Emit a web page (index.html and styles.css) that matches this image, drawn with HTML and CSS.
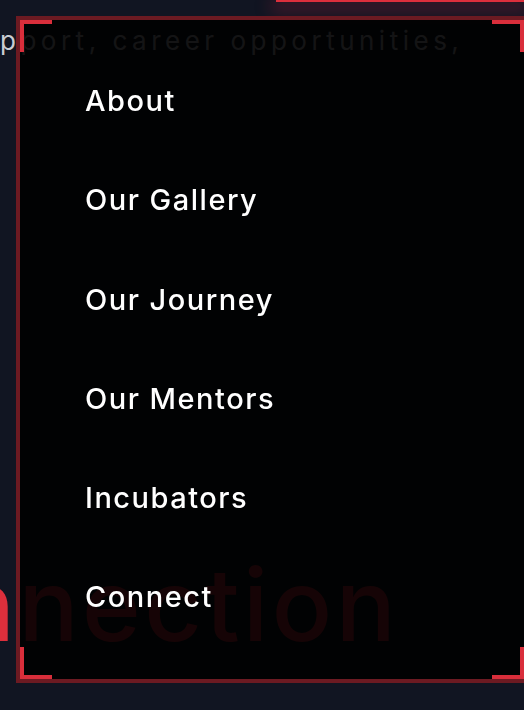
FILE: index.html
```html
<!DOCTYPE html>
<html lang="en">
<head>
<meta charset="utf-8">
<title>Menu</title>
<link rel="stylesheet" href="styles.css">
</head>
<body>
  <div class="page">
    <div class="topbar">
      <a class="cta" href="#"></a>
    </div>
    <p class="lead">pport, career opportunities,</p>
    <h2 class="hero">Connection</h2>
  </div>

  <nav class="menu">
    <span class="corner tl"></span>
    <span class="corner tr"></span>
    <span class="corner bl"></span>
    <span class="corner br"></span>
    <ul class="menu-list">
      <li><a href="#">About</a></li>
      <li><a href="#">Our Gallery</a></li>
      <li><a href="#">Our Journey</a></li>
      <li><a href="#">Our Mentors</a></li>
      <li><a href="#">Incubators</a></li>
      <li><a href="#">Connect</a></li>
    </ul>
  </nav>
</body>
</html>
```

FILE: styles.css
```css
* { box-sizing: border-box; }

html, body {
  margin: 0;
  padding: 0;
  overflow: hidden;
}

body {
  width: 524px;
  height: 710px;
  background: #111522;
  font-family: Inter, "Noto Sans", sans-serif;
  color: #fff;
}

.page {
  display: flex;
  flex-direction: column;
}

.topbar {
  display: flex;
  justify-content: flex-end;
  height: 16px;
  overflow: visible;
}

.cta {
  display: block;
  width: 248px;
  height: 2px;
  background: #dc2f3c;
  box-shadow: 0 5px 16px 5px rgba(170, 35, 60, 0.35);
}

.lead {
  margin: 8px 0 0 0;
  font-size: 26px;
  line-height: 34px;
  letter-spacing: 4.5px;
  color: #c9ccd3;
  white-space: nowrap;
}

.hero {
  margin: 497px 0 0 -186px;
  font-size: 100px;
  font-weight: 500;
  line-height: 100px;
  letter-spacing: 3.5px;
  color: #dc2f3c;
  white-space: nowrap;
}

.menu {
  position: fixed;
  left: 16px;
  top: 16px;
  width: 512px;
  height: 667px;
  border: 4px solid #6c1a22;
  background: rgba(0, 0, 0, 0.9);
  padding: 64px 0 0 65px;
}

.corner {
  position: absolute;
  width: 32px;
  height: 32px;
  border: 0 solid #d92e3b;
}
.corner.tl { left: 0; top: 0; border-top-width: 4px; border-left-width: 4px; }
.corner.tr { right: 0; top: 0; border-top-width: 4px; border-right-width: 4px; }
.corner.bl { left: 0; bottom: 0; border-bottom-width: 4px; border-left-width: 4px; }
.corner.br { right: 0; bottom: 0; border-bottom-width: 4px; border-right-width: 4px; }

.menu-list {
  list-style: none;
  margin: 0;
  padding: 0;
  display: flex;
  flex-direction: column;
}

.menu-list li {
  height: 99.3px;
}

.menu-list a {
  color: #fff;
  text-decoration: none;
  font-size: 29px;
  line-height: 34px;
  font-weight: 500;
  letter-spacing: 1.5px;
}
```
